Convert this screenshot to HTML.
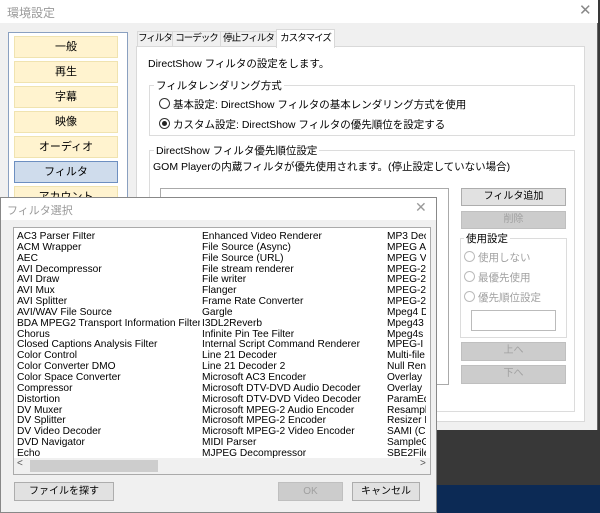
<!DOCTYPE html>
<html><head><meta charset="utf-8"><style>
*{margin:0;padding:0;box-sizing:border-box}
body{width:600px;height:513px;overflow:hidden;position:relative;background:#383838;font-family:"Liberation Sans","Noto Sans CJK JP",sans-serif;font-size:11px;color:#000}
.a{position:absolute;white-space:nowrap}
.btn{position:absolute;background:#e1e1e1;border:1px solid #adadad;text-align:center;font-size:10px;line-height:16px}
.dis{color:#a0a0a0;background:#cccccc;border-color:#bfbfbf}
.nav{position:absolute;left:14px;width:104px;height:22px;background:#fff3cf;border:1px solid #f0e3b0;text-align:center;line-height:20px;font-size:11px}
.rad{display:inline-block;width:11px;height:11px;border:1px solid #333;border-radius:50%;vertical-align:-1px;margin-right:3px;background:#fff;position:relative}
.rd{border-color:#bbb}
.col{position:absolute;top:232px;line-height:10.85px;font-size:10.2px;white-space:nowrap;overflow:hidden;height:226px}
.tab{position:absolute;top:31px;height:16px;border:1px solid #d9d9d9;background:#f0f0f0;text-align:center;line-height:14px;font-size:9.5px;letter-spacing:-1px;white-space:nowrap;overflow:hidden}
</style></head><body>
<div class="a" style="left:0;top:485px;width:600px;height:28px;background:#0c2a55"></div>
<div class="a" style="left:0;top:0;width:598px;height:430px;background:#f0f0f0;border-right:1px solid #666"></div>
<div class="a" style="left:0;top:0;width:598px;height:23px;background:#fff"></div>
<div class="a" style="left:7px;top:4px;color:#999;font-size:12px">環境設定</div>
<div class="a" style="left:579px;top:1px;color:#888;font-size:15px">✕</div>
<div class="a" style="left:8px;top:32px;width:120px;height:170px;background:#fff;border:1px solid #8aa0c0"></div>
<div class="nav" style="top:36px">一般</div>
<div class="nav" style="top:61px">再生</div>
<div class="nav" style="top:86px">字幕</div>
<div class="nav" style="top:111px">映像</div>
<div class="nav" style="top:136px">オーディオ</div>
<div class="nav" style="top:161px;background:#cfdcec;border-color:#6d8fc0">フィルタ</div>
<div class="nav" style="top:186px">アカウント</div>
<div class="a" style="left:136px;top:46px;width:449px;height:376px;background:#fff;border:1px solid #d9d9d9"></div>
<div class="tab" style="left:137px;width:36px">フィルタ</div>
<div class="tab" style="left:172px;width:49px">コーデック</div>
<div class="tab" style="left:220px;width:57px">停止フィルタ</div>
<div class="tab" style="left:276px;top:29px;width:59px;height:19px;border-bottom:none;background:#fff;line-height:17px">カスタマイズ</div>
<div class="a" style="left:148px;top:56px;font-size:10.5px">DirectShow フィルタの設定をします。</div>
<div class="a" style="left:149px;top:85px;width:426px;height:51px;border:1px solid #dcdcdc"></div>
<div class="a" style="left:154px;top:78px;background:#fff;padding:0 2px;font-size:10.5px">フィルタレンダリング方式</div>
<div class="a" style="left:159px;top:97px;font-size:10.5px"><span class="rad"></span>基本設定: DirectShow フィルタの基本レンダリング方式を使用</div>
<div class="a" style="left:159px;top:117px;font-size:10.5px"><span class="rad"><span class="a" style="left:2px;top:2px;width:5px;height:5px;border-radius:50%;background:#222"></span></span>カスタム設定: DirectShow フィルタの優先順位を設定する</div>
<div class="a" style="left:149px;top:150px;width:426px;height:262px;border:1px solid #dcdcdc"></div>
<div class="a" style="left:154px;top:143px;background:#fff;padding:0 2px;font-size:10.5px">DirectShow フィルタ優先順位設定</div>
<div class="a" style="left:153px;top:159px;font-size:10.5px">GOM Playerの内蔵フィルタが優先使用されます。(停止設定していない場合)</div>
<div class="a" style="left:160px;top:188px;width:289px;height:197px;border:1px solid #aaa;background:#fff"></div>
<div class="btn" style="left:461px;top:188px;width:105px;height:18px">フィルタ追加</div>
<div class="btn dis" style="left:461px;top:211px;width:105px;height:18px">削除</div>
<div class="a" style="left:460px;top:238px;width:107px;height:100px;border:1px solid #dcdcdc"></div>
<div class="a" style="left:464px;top:231px;background:#fff;padding:0 2px;font-size:10.5px">使用設定</div>
<div class="a" style="left:464px;top:250px;color:#a0a0a0;font-size:10.5px"><span class="rad rd"></span>使用しない</div>
<div class="a" style="left:464px;top:270px;color:#a0a0a0;font-size:10.5px"><span class="rad rd"></span>最優先使用</div>
<div class="a" style="left:464px;top:290px;color:#a0a0a0;font-size:10.5px"><span class="rad rd"></span>優先順位設定</div>
<div class="a" style="left:471px;top:310px;width:85px;height:21px;border:1px solid #bbb;background:#fff"></div>
<div class="btn dis" style="left:461px;top:342px;width:105px;height:19px">上へ</div>
<div class="btn dis" style="left:461px;top:365px;width:105px;height:19px">下へ</div>
<div class="a" style="left:0;top:197px;width:437px;height:316px;background:#f0f0f0;border:1px solid #888"></div>
<div class="a" style="left:1px;top:198px;width:435px;height:22px;background:#fff"></div>
<div class="a" style="left:7px;top:202px;color:#999;font-size:11px">フィルタ選択</div>
<div class="a" style="left:415px;top:199px;color:#999;font-size:14px">✕</div>
<div class="a" style="left:13px;top:227px;width:418px;height:248px;border:1px solid #aaa;background:#fff;overflow:hidden"></div>
<div class="col" style="left:17px;width:183px">AC3 Parser Filter<br>ACM Wrapper<br>AEC<br>AVI Decompressor<br>AVI Draw<br>AVI Mux<br>AVI Splitter<br>AVI/WAV File Source<br>BDA MPEG2 Transport Information Filter<br>Chorus<br>Closed Captions Analysis Filter<br>Color Control<br>Color Converter DMO<br>Color Space Converter<br>Compressor<br>Distortion<br>DV Muxer<br>DV Splitter<br>DV Video Decoder<br>DVD Navigator<br>Echo</div>
<div class="col" style="left:202px;width:183px">Enhanced Video Renderer<br>File Source (Async)<br>File Source (URL)<br>File stream renderer<br>File writer<br>Flanger<br>Frame Rate Converter<br>Gargle<br>I3DL2Reverb<br>Infinite Pin Tee Filter<br>Internal Script Command Renderer<br>Line 21 Decoder<br>Line 21 Decoder 2<br>Microsoft AC3 Encoder<br>Microsoft DTV-DVD Audio Decoder<br>Microsoft DTV-DVD Video Decoder<br>Microsoft MPEG-2 Audio Encoder<br>Microsoft MPEG-2 Encoder<br>Microsoft MPEG-2 Video Encoder<br>MIDI Parser<br>MJPEG Decompressor</div>
<div class="col" style="left:387px;width:39px">MP3 Decoder<br>MPEG Audio<br>MPEG Video<br>MPEG-2<br>MPEG-2<br>MPEG-2<br>MPEG-2<br>Mpeg4 Dec<br>Mpeg43<br>Mpeg4s<br>MPEG-I<br>Multi-file<br>Null Renderer<br>Overlay<br>Overlay<br>ParamEq<br>Resampler<br>Resizer DMO<br>SAMI (CC)<br>SampleGrabber<br>SBE2File</div>
<div class="a" style="left:14px;top:458px;width:416px;height:16px;background:#f0f0f0"></div>
<div class="a" style="left:30px;top:460px;width:128px;height:12px;background:#cdcdcd"></div>
<div class="a" style="left:17px;top:458px;color:#555;font-size:10px">&lt;</div>
<div class="a" style="left:420px;top:458px;color:#555;font-size:10px">&gt;</div>
<div class="btn" style="left:14px;top:482px;width:100px;height:19px;line-height:17px">ファイルを探す</div>
<div class="btn dis" style="left:278px;top:482px;width:65px;height:19px;line-height:17px">OK</div>
<div class="btn" style="left:352px;top:482px;width:68px;height:19px;line-height:17px">キャンセル</div>
</body></html>
